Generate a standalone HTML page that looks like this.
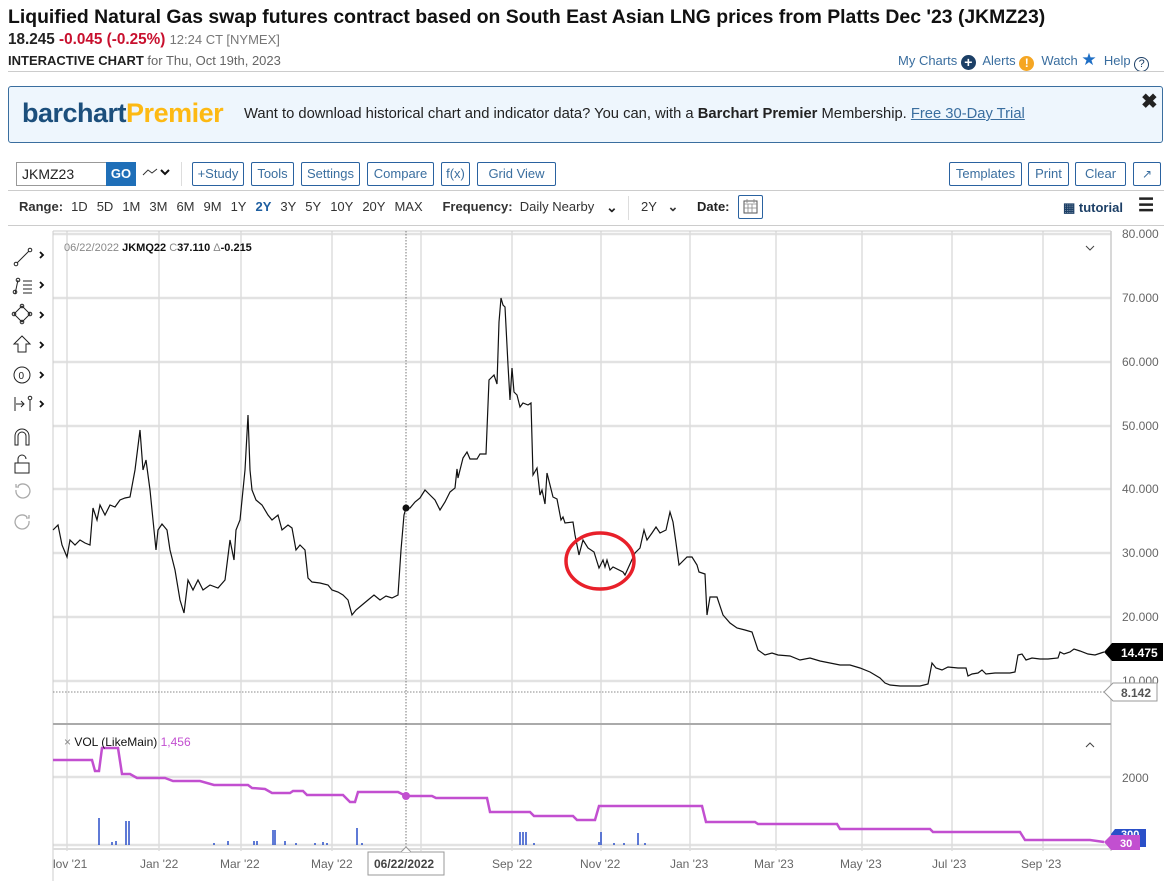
<!DOCTYPE html>
<html><head><meta charset="utf-8"><style>
*{margin:0;padding:0;box-sizing:border-box}
body{width:1176px;height:881px;overflow:hidden;background:#fff;font-family:"Liberation Sans",sans-serif;color:#222;position:relative}
.a{position:absolute;white-space:nowrap}
.btn{position:absolute;top:162px;height:24px;border:1px solid #2a62a0;border-radius:2px;color:#3a6e9f;font-size:13px;line-height:22px;text-align:center}
.rg span{margin-right:9px}
</style></head><body>
<div class="a" style="left:8px;top:6px;font-size:19.4px;font-weight:bold;color:#111">Liquified Natural Gas swap futures contract based on South East Asian LNG prices from Platts Dec '23 (JKMZ23)</div>
<div class="a" style="left:8px;top:31px;font-size:15.3px;font-weight:bold">18.245 <span style="color:#c8102e">-0.045 (-0.25%)</span> <span style="font-weight:normal;font-size:13px;color:#777">12:24 CT [NYMEX]</span></div>
<div class="a" style="left:8px;top:53px;font-size:13px"><b>INTERACTIVE CHART</b> <span style="color:#666">for Thu, Oct 19th, 2023</span></div>
<div class="a" style="left:898px;top:50px;font-size:13px;color:#3a6e9f">My Charts <span style="display:inline-block;width:15px;height:15px;border-radius:50%;background:#1c3f66;color:#fff;font-weight:bold;font-size:14px;line-height:15px;text-align:center;vertical-align:-2px">+</span>&nbsp; Alerts <span style="display:inline-block;width:15px;height:15px;border-radius:50%;background:#f5a623;color:#fff;font-weight:bold;font-size:12px;line-height:15px;text-align:center;vertical-align:-2px">!</span>&nbsp; Watch <span style="color:#1f6fc5;font-size:17px">★</span>&nbsp; Help <span style="display:inline-block;width:15px;height:15px;border-radius:50%;border:1.5px solid #1c3f66;color:#1c3f66;font-size:11px;line-height:12px;text-align:center;vertical-align:-2px">?</span></div>
<div class="a" style="left:8px;top:71px;width:1156px;height:1px;background:#ccc"></div>
<div class="a" style="left:8px;top:86px;width:1155px;height:57px;background:#eef6fd;border:1px solid #3a6e9f;border-radius:3px"></div>
<div class="a" style="left:22px;top:98px;font-size:27px;font-weight:bold;letter-spacing:-0.5px;color:#1c4f7c">barchart<span style="color:#fdb913">Premier</span></div>
<div class="a" style="left:244px;top:106px;font-size:14.75px;color:#222">Want to download historical chart and indicator data? You can, with a <b>Barchart Premier</b> Membership. <u style="color:#3a6e9f">Free 30-Day Trial</u></div>
<div class="a" style="left:1141px;top:89px;font-size:20px;font-weight:bold">✖</div>
<div class="a" style="left:16px;top:162px;width:91px;height:24px;border:1px solid #999;font-size:14px;line-height:22px;padding-left:5px">JKMZ23</div>
<div class="a" style="left:106px;top:162px;width:30px;height:24px;background:#1f6fb8;color:#fff;font-weight:bold;font-size:13px;line-height:24px;text-align:center">GO</div>
<svg class="a" style="left:142px;top:166px" width="30" height="14"><path d="M1 9 L6 4 L10 7 L15 3" fill="none" stroke="#333" stroke-width="1"/><path d="M19 4 L23 8 L27 4" fill="none" stroke="#111" stroke-width="2"/></svg>
<div class="a" style="left:181px;top:162px;width:1px;height:24px;background:#ddd"></div>
<div class="btn" style="left:192px;width:52px">+Study</div>
<div class="btn" style="left:251px;width:43px">Tools</div>
<div class="btn" style="left:301px;width:59px">Settings</div>
<div class="btn" style="left:367px;width:67px">Compare</div>
<div class="btn" style="left:441px;width:29px">f(x)</div>
<div class="btn" style="left:477px;width:79px">Grid View</div>
<div class="btn" style="left:949px;width:73px">Templates</div>
<div class="btn" style="left:1028px;width:41px">Print</div>
<div class="btn" style="left:1075px;width:51px">Clear</div>
<div class="btn" style="left:1133px;width:28px;font-size:12px">↗</div>
<div class="a" style="left:8px;top:190px;width:1156px;height:1px;background:#ccc"></div>
<div class="a rg" style="left:19px;top:199px;font-size:13px;color:#333"><b style="margin-right:8px">Range:</b><span>1D</span><span>5D</span><span>1M</span><span>3M</span><span>6M</span><span>9M</span><span>1Y</span><span style="color:#1f5fa0;font-weight:bold">2Y</span><span>3Y</span><span>5Y</span><span>10Y</span><span>20Y</span><span>MAX</span>&nbsp;&nbsp;&nbsp;<b>Frequency:</b>&nbsp; Daily Nearby</div>
<div class="a" style="left:606px;top:199px;font-size:14px;font-weight:bold">⌄</div>
<div class="a" style="left:628px;top:196px;width:1px;height:24px;background:#ddd"></div>
<div class="a" style="left:641px;top:199px;font-size:13px;color:#333">2Y &nbsp;&nbsp;<b>⌄</b></div>
<div class="a" style="left:697px;top:199px;font-size:13px;font-weight:bold">Date:</div>
<div class="a" style="left:738px;top:195px;width:25px;height:24px;border:1px solid #2a62a0;border-radius:2px"><svg width="23" height="22"><rect x="5" y="5" width="13" height="12" fill="none" stroke="#555"/><path d="M5 8h13M8 3v4M15 3v4M9 8v9M13 8v9M5 12h13" stroke="#888" stroke-width="0.8"/></svg></div>
<div class="a" style="left:1063px;top:200px;font-size:13px;font-weight:bold;color:#1c3f66">▦ tutorial</div>
<div class="a" style="left:1138px;top:195px;font-size:18px;font-weight:bold">☰</div>
<div class="a" style="left:8px;top:225px;width:1156px;height:1px;background:#ccc"></div>

<svg class="a" style="left:0;top:226px" width="1176" height="655" viewBox="0 226 1176 655">
<g stroke="#e2e2e2" stroke-width="2.5">
<path d="M53 234H1111M53 298H1111M53 362H1111M53 426H1111M53 489H1111M53 553H1111M53 617H1111M53 681H1111M53 777H1111M53 845H1111"/>
</g>
<g stroke="#ddd" stroke-width="1.5">
<path d="M67 231V851M159 231V851M241 231V851M332 231V851M421 231V851M512 231V851M601 231V851M690 231V851M776 231V851M862 231V851M952 231V851M1043 231V851"/>
</g>
<path d="M53 231V881" stroke="#ccc"/>
<path d="M1111 231V851" stroke="#ccc" stroke-width="1.5"/>
<path d="M53 231H1111" stroke="#ccc"/>
<path d="M53 724H1111" stroke="#aaa" stroke-width="2"/>
<path d="M53 849H1111" stroke="#ddd" stroke-width="2"/>
<path d="M53 692H1111" stroke="#888" stroke-dasharray="1.5 1.5"/>
<path d="M406 231V851" stroke="#777" stroke-dasharray="1.5 1.5"/>
<polyline fill="none" stroke="#111" stroke-width="1.2" points="53,530 58,525 62,545 67,557 70,540 75,545 80,540 85,543 90,545 93,508 97,520 100,505 105,515 110,505 115,507 120,500 125,498 130,497 135,470 140,430 143,470 146,460 150,490 153,520 156,550 158,530 162,524 167,530 170,550 175,570 180,600 184,613 188,580 193,590 198,580 203,590 210,585 218,588 225,580 230,540 234,560 236,530 240,520 245,470 248,415 250,470 252,490 256,500 262,505 268,515 272,520 278,515 282,530 288,525 292,528 296,550 300,545 305,550 308,578 312,582 320,583 328,585 332,590 338,592 343,595 348,600 352,615 356,610 362,605 368,600 374,595 380,600 386,596 392,598 398,595 401,550 404,515 406,508 410,508 415,502 420,498 425,490 430,495 435,500 440,510 445,502 450,492 455,488 457,469 458,478 463,458 467,452 470,459 477,459 480,454 486,454 489,380 492,377 494,375 497,384 499,322 501,298 503,305 505,307 508,365 510,400 512,368 514,392 517,395 520,407 523,403 528,405 531,403 533,475 537,468 540,495 542,490 545,504 547,473 550,485 553,497 557,499 561,520 563,517 565,523 573,522 575,535 579,555 583,540 588,548 594,552 599,568 603,560 605,567 607,560 610,570 613,567 623,572 625,575 635,553 640,548 644,530 647,540 652,533 656,527 660,533 666,530 670,512 673,522 676,543 679,565 687,557 692,557 697,565 699,572 705,574 707,615 710,597 717,597 723,615 730,623 737,628 745,630 752,632 758,650 765,655 772,653 778,655 790,656 800,660 810,658 820,661 830,663 840,665 850,665 860,668 870,672 880,678 885,683 890,685 900,686 910,686 920,686 928,684 932,663 936,668 942,670 948,667 958,668 966,668 968,676 972,674 978,673 982,670 986,674 995,673 1010,673 1015,672 1018,655 1022,654 1026,660 1032,658 1040,659 1048,659 1058,658 1060,652 1064,654 1070,652 1074,649 1080,651 1088,654 1095,655 1104,652"/>
<circle cx="406" cy="508" r="3.5" fill="#111"/>
<ellipse cx="600" cy="561" rx="34" ry="28" fill="none" stroke="#e8202a" stroke-width="3.5"/>
<g stroke="#2a4fc8" stroke-width="1.5">
<path d="M99 845v-27M126 845v-24M129 845v-24M112 845v-3M116 845v-4M214 845v-2M228 845v-4M254 845v-4M257 845v-4M273 845v-15M275 845v-15M285 845v-4M296 845v-2M315 845v-2M323 845v-3M327 845v-2M357 845v-17M362 845v-2M520 845v-13M523 845v-13M526 845v-13M534 845v-2M599 845v-3M601 845v-13M614 845v-2M624 845v-2M638 845v-12M645 845v-2"/>
</g>
<polyline fill="none" stroke="#c24fd0" stroke-width="2.5" points="53,760 92,760 95,771 99,771 102,748 118,748 122,774 130,774 137,778 165,778 173,781 200,781 214,785 248,785 252,788 265,789 272,793 290,793 293,791 303,791 307,795 325,795 343,795 350,802 355,802 358,792 398,792 406,796 432,796 436,798 487,798 490,812 530,812 534,816 573,816 577,820 595,820 599,806 637,806 702,806 706,822 755,822 758,824 837,824 840,829 930,829 933,832 1020,832 1025,840 1090,840 1104,842"/>
<circle cx="406" cy="796" r="4" fill="#c24fd0"/>
<g font-family="Liberation Sans,sans-serif" font-size="12" fill="#666">
<text x="1122" y="238">80.000</text><text x="1122" y="302">70.000</text><text x="1122" y="366">60.000</text><text x="1122" y="430">50.000</text><text x="1122" y="493">40.000</text><text x="1122" y="557">30.000</text><text x="1122" y="621">20.000</text><text x="1122" y="685">10.000</text><text x="1122" y="782">2000</text>
<text x="53" y="868">lov '21</text><text x="140" y="868">Jan '22</text><text x="220" y="868">Mar '22</text><text x="311" y="868">May '22</text><text x="492" y="868">Sep '22</text><text x="580" y="868">Nov '22</text><text x="670" y="868">Jan '23</text><text x="754" y="868">Mar '23</text><text x="840" y="868">May '23</text><text x="932" y="868">Jul '23</text><text x="1021" y="868">Sep '23</text>
<text x="64" y="251" font-size="11" fill="#888">06/22/2022 <tspan font-weight="bold" fill="#111">JKMQ22</tspan> C<tspan font-weight="bold" fill="#111">37.110</tspan> Δ<tspan font-weight="bold" fill="#111">-0.215</tspan></text>
<text x="64" y="746" font-size="12" fill="#888">×  <tspan fill="#111">VOL (LikeMain)</tspan> <tspan fill="#c24fd0">1,456</tspan></text>
</g>
<path d="M1086 246l4 4 4-4" fill="none" stroke="#444"/>
<path d="M1086 747l4-4 4 4" fill="none" stroke="#444"/>
<path d="M1104 652l8-9h51v18h-51z" fill="#000"/>
<text x="1121" y="657" font-family="Liberation Sans,sans-serif" font-size="12" font-weight="bold" fill="#fff">14.475</text>
<path d="M1104 692l9-9h44v18h-44z" fill="#fff" stroke="#999"/>
<text x="1121" y="697" font-family="Liberation Sans,sans-serif" font-size="12" font-weight="bold" fill="#555">8.142</text>
<path d="M1111 834l4-5h31v18h-35z" fill="#2a4fc8"/>
<text x="1121" y="838" font-family="Liberation Sans,sans-serif" font-size="11" font-weight="bold" fill="#fff">300</text>
<path d="M1104 842l7-7h29v15h-29z" fill="#c24fd0"/>
<text x="1120" y="847" font-family="Liberation Sans,sans-serif" font-size="11" font-weight="bold" fill="#fff">30</text>
<rect x="368" y="852" width="76" height="23" fill="#fff" stroke="#999"/>
<path d="M401 852l5-5 5 5" fill="#fff" stroke="#999"/>
<text x="374" y="868" font-family="Liberation Sans,sans-serif" font-size="12" font-weight="bold" fill="#444">06/22/2022</text>
<g fill="none" stroke="#222" stroke-width="1">
<path d="M17 263l12-12"/><circle cx="16" cy="264" r="1.8"/><circle cx="30" cy="250" r="1.8"/>
<path d="M15 294l3-14"/><circle cx="15" cy="292" r="1.8"/><circle cx="18" cy="280" r="1.8"/><path d="M23 281h9M23 285h9M23 289h9M23 293h9"/>
<path d="M22 306l8 8-8 8-8-8z"/><circle cx="22" cy="306" r="1.8"/><circle cx="30" cy="314" r="1.8"/><circle cx="22" cy="322" r="1.8"/><circle cx="14" cy="314" r="1.8"/>
<path d="M22 336l-8 8h4v8h8v-8h4z"/>
<circle cx="22" cy="375" r="8"/><text x="18.5" y="379" font-size="10" fill="#222" stroke="none" font-family="Liberation Sans,sans-serif">0</text>
<path d="M15 397v14M16 404h8M21 401l3 3-3 3M30 400v11"/><circle cx="30" cy="398" r="1.8"/>
<path d="M15 445v-9a7 7 0 0 1 14 0v9h-3v-9a4 4 0 0 0-8 0v9z"/>
<path d="M15 463h14v10h-14zM18 463v-4a4 4 0 0 1 8 0"/>
</g>
<g fill="none" stroke="#aaa" stroke-width="1.3"><path d="M16 490a7 7 0 1 0 2-4M16 484v3h3"/><path d="M29 521a7 7 0 1 1-2-4M29 515v3h-3"/></g>
<g fill="none" stroke="#111" stroke-width="1.8"><path d="M40 252l3 3-3 3M40 282l3 3-3 3M40 312l3 3-3 3M40 342l3 3-3 3M40 372l3 3-3 3M40 401l3 3-3 3"/></g>
</svg>
</body></html>
